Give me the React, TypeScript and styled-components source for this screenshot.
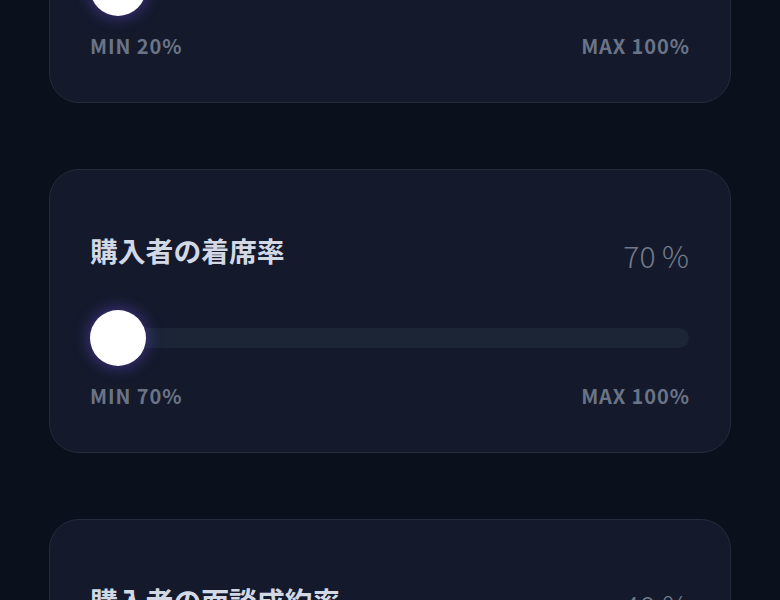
import React from "react";
import styled, { createGlobalStyle } from "styled-components";

const GlobalStyle = createGlobalStyle`
  html, body {
    margin: 0;
    padding: 0;
    background: #0a101c;
    overflow: hidden;
  }
  body {
    font-family: "Noto Sans CJK JP", "Noto Sans", sans-serif;
  }
`;

const Page = styled.div`
  display: flex;
  flex-direction: column;
  gap: 66px;
  padding: 0 49px;
  margin-top: -181px;
`;

const Card = styled.section`
  background: #141a2c;
  border: 1px solid #232b3c;
  border-radius: 30px;
  padding: 60px 41px 43px 40px;
  display: flex;
  flex-direction: column;
`;

const Header = styled.div`
  display: flex;
  justify-content: space-between;
  align-items: flex-start;
  height: 40px;
`;

const Title = styled.h3`
  margin: 0;
  font-family: "Noto Sans CJK JP", "Noto Sans", sans-serif;
  font-size: 27.8px;
  line-height: 40px;
  font-weight: 700;
  color: #d3d9e4;
`;

const Value = styled.span`
  font-family: "Noto Sans CJK JP", "Noto Sans", sans-serif;
  font-size: 30px;
  line-height: 40px;
  font-weight: 300;
  color: #717a8a;
  margin-top: 5px;
`;

const Slider = styled.div`
  position: relative;
  display: flex;
  align-items: center;
  height: 56px;
  margin-top: 40px;
`;

const Track = styled.div`
  flex: 1;
  height: 20px;
  border-radius: 10px;
  background: #1b2536;
`;

const Thumb = styled.div`
  position: absolute;
  top: 0;
  width: 56px;
  height: 56px;
  border-radius: 50%;
  background: #ffffff;
  box-shadow: 0 0 14px 3px rgba(108, 78, 220, 0.4);
`;

const Limits = styled.div`
  display: flex;
  justify-content: space-between;
  margin-top: 17px;
  font-family: "Noto Sans CJK JP", "Noto Sans", sans-serif;
  font-size: 20px;
  line-height: 26px;
  font-weight: 700;
  letter-spacing: 0.9px;
  color: #6a7486;

  span:last-child {
    margin-right: -0.9px;
  }
`;

type Item = { title: string; value: number; min: number; max: number };

const items: Item[] = [
  { title: "購入者の出席率", value: 20, min: 20, max: 100 },
  { title: "購入者の着席率", value: 70, min: 70, max: 100 },
  { title: "購入者の面談成約率", value: 40, min: 40, max: 100 },
];

function RangeCard({ item }: { item: Item }) {
  const pct = ((item.value - item.min) / (item.max - item.min)) * 100;
  return (
    <Card>
      <Header>
        <Title>{item.title}</Title>
        <Value>{item.value} %</Value>
      </Header>
      <Slider>
        <Track />
        <Thumb style={{ left: `calc(${pct}% - ${(pct / 100) * 56}px)` }} />
      </Slider>
      <Limits>
        <span>MIN {item.min}%</span>
        <span>MAX {item.max}%</span>
      </Limits>
    </Card>
  );
}

export default function App() {
  return (
    <>
      <GlobalStyle />
      <Page>
        {items.map((it) => (
          <RangeCard key={it.title} item={it} />
        ))}
      </Page>
    </>
  );
}
